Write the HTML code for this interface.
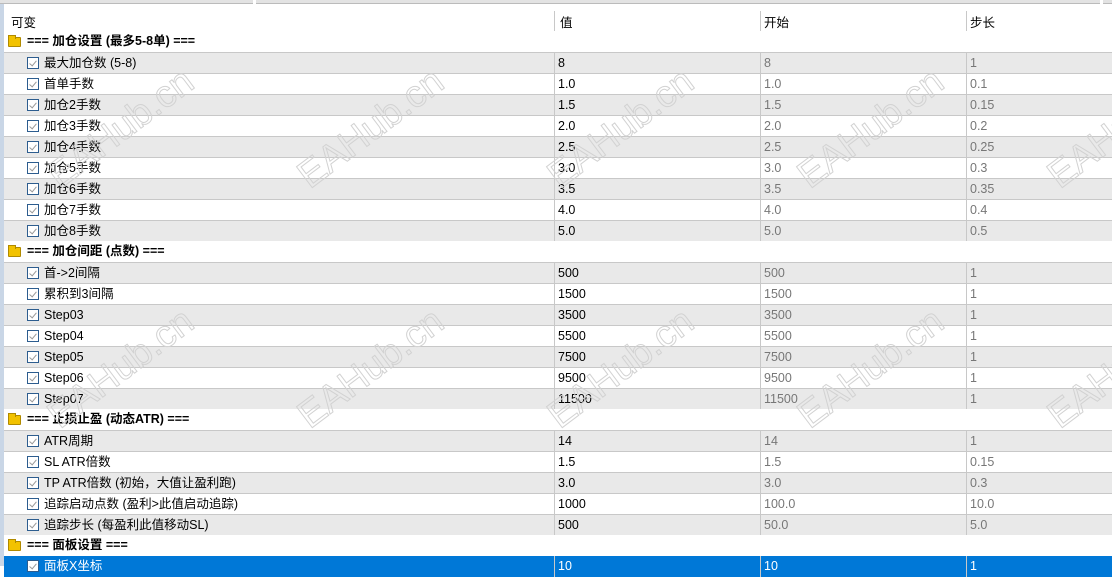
<!DOCTYPE html>
<html><head><meta charset="utf-8"><style>
*{margin:0;padding:0;box-sizing:border-box}
body{width:1112px;height:566px;overflow:hidden;background:#fff;font-family:"Liberation Sans","Noto Sans CJK SC",sans-serif;font-size:12.5px;color:#000;position:relative}
.top{position:absolute;left:0;top:0;width:1112px;height:4px;background:#e3e3e3;border-bottom:1px solid #bbb}
.top i{position:absolute;top:0;height:4px;width:3px;background:#fff}
.lb{position:absolute;left:0;top:4px;width:4px;height:562px;background:#c9d6e6}
.hdr{position:absolute;top:4px;left:4px;right:0;height:27px}
.hdr span{position:absolute;top:8px}
.hsep{position:absolute;top:7px;height:23px;width:1px;background:#c8c8c8}
.row{position:absolute;left:4px;width:1108px;height:21px;line-height:20px}
.g{background:#e9e9e9;border-top:1px solid #c8c8c8}
.w{background:#fff;border-top:1px solid #c8c8c8}
.grp{background:#fff;font-weight:bold}
.sel{background:#0078d7;color:#fff}
.row span{position:absolute;top:0}
.row .c{position:absolute;top:0;width:1px;height:21px;background:#c8c8c8}
.cb{position:absolute;left:23px;top:4px;width:12px;height:12px;border:1px solid #2d5d8f;background:#fff}
.cb:after{content:"";position:absolute;left:3px;top:1px;width:3px;height:6px;border-right:1px solid #999;border-bottom:1px solid #999;transform:rotate(40deg)}
.fold{position:absolute;left:4px;top:6px;width:13px;height:10px;background:#f2c200;border:1px solid #b08a00;border-radius:1px}
.fold:before{content:"";position:absolute;left:-1px;top:-3px;width:6px;height:3px;background:#f2c200;border:1px solid #b08a00;border-bottom:none}
.s{color:#777}
.sel .s{color:#fff}
svg{position:absolute;left:0;top:0;pointer-events:none}
</style></head><body>
<div class="top"><i style="left:253px"></i><i style="left:1100px"></i></div>
<div class="lb"></div>
<div class="hdr">
<span style="left:7px">可变</span>
<div class="hsep" style="left:550px"></div><span style="left:556px">值</span>
<div class="hsep" style="left:756px"></div><span style="left:760px">开始</span>
<div class="hsep" style="left:962px"></div><span style="left:966px">步长</span>
</div>
<div id="rows"></div>
<script>
var d=[
['G','=== 加仓设置 (最多5-8单) ==='],
['最大加仓数 (5-8)','8','8','1'],['首单手数','1.0','1.0','0.1'],['加仓2手数','1.5','1.5','0.15'],['加仓3手数','2.0','2.0','0.2'],['加仓4手数','2.5','2.5','0.25'],['加仓5手数','3.0','3.0','0.3'],['加仓6手数','3.5','3.5','0.35'],['加仓7手数','4.0','4.0','0.4'],['加仓8手数','5.0','5.0','0.5'],
['G','=== 加仓间距 (点数) ==='],
['首->2间隔','500','500','1'],['累积到3间隔','1500','1500','1'],['Step03','3500','3500','1'],['Step04','5500','5500','1'],['Step05','7500','7500','1'],['Step06','9500','9500','1'],['Step07','11500','11500','1'],
['G','=== 止损止盈 (动态ATR) ==='],
['ATR周期','14','14','1'],['SL ATR倍数','1.5','1.5','0.15'],['TP ATR倍数 (初始，大值让盈利跑)','3.0','3.0','0.3'],['追踪启动点数 (盈利>此值启动追踪)','1000','100.0','10.0'],['追踪步长 (每盈利此值移动SL)','500','50.0','5.0'],
['G','=== 面板设置 ==='],
['S面板X坐标','10','10','1']];
var h='',y=31,k=0;
d.forEach(function(r){
 if(r[0]=='G'){h+='<div class="row grp" style="top:'+y+'px"><div class="fold"></div><span style="left:23px">'+r[1]+'</span></div>';k=0;}
 else{var sel=r[0][0]=='S'&&r[0][1]=='面';var cls=sel?'sel':(k%2==0?'g':'w');var t=sel?r[0].slice(1):r[0];
 h+='<div class="row '+cls+'" style="top:'+y+'px"><div class="cb"></div><span style="left:40px">'+t+'</span><div class="c" style="left:550px"></div><span style="left:554px">'+r[1]+'</span><div class="c" style="left:756px"></div><span class="s" style="left:760px">'+r[2]+'</span><div class="c" style="left:962px"></div><span class="s" style="left:966px">'+r[3]+'</span></div>';k++;}
 y+=21;});
document.getElementById('rows').innerHTML=h;
</script>
<svg width="1112" height="566">
<g font-family="Liberation Sans,sans-serif" font-size="38" fill="none" stroke="#d2d2d2" stroke-width="1">
<text transform="translate(122,130) rotate(-37)" text-anchor="middle" dominant-baseline="middle">EAHub.cn</text>
<text transform="translate(372,130) rotate(-37)" text-anchor="middle" dominant-baseline="middle">EAHub.cn</text>
<text transform="translate(622,130) rotate(-37)" text-anchor="middle" dominant-baseline="middle">EAHub.cn</text>
<text transform="translate(872,130) rotate(-37)" text-anchor="middle" dominant-baseline="middle">EAHub.cn</text>
<text transform="translate(1122,130) rotate(-37)" text-anchor="middle" dominant-baseline="middle">EAHub.cn</text>
<text transform="translate(122,370) rotate(-37)" text-anchor="middle" dominant-baseline="middle">EAHub.cn</text>
<text transform="translate(372,370) rotate(-37)" text-anchor="middle" dominant-baseline="middle">EAHub.cn</text>
<text transform="translate(622,370) rotate(-37)" text-anchor="middle" dominant-baseline="middle">EAHub.cn</text>
<text transform="translate(872,370) rotate(-37)" text-anchor="middle" dominant-baseline="middle">EAHub.cn</text>
<text transform="translate(1122,370) rotate(-37)" text-anchor="middle" dominant-baseline="middle">EAHub.cn</text>
</g></svg>
</body></html>
